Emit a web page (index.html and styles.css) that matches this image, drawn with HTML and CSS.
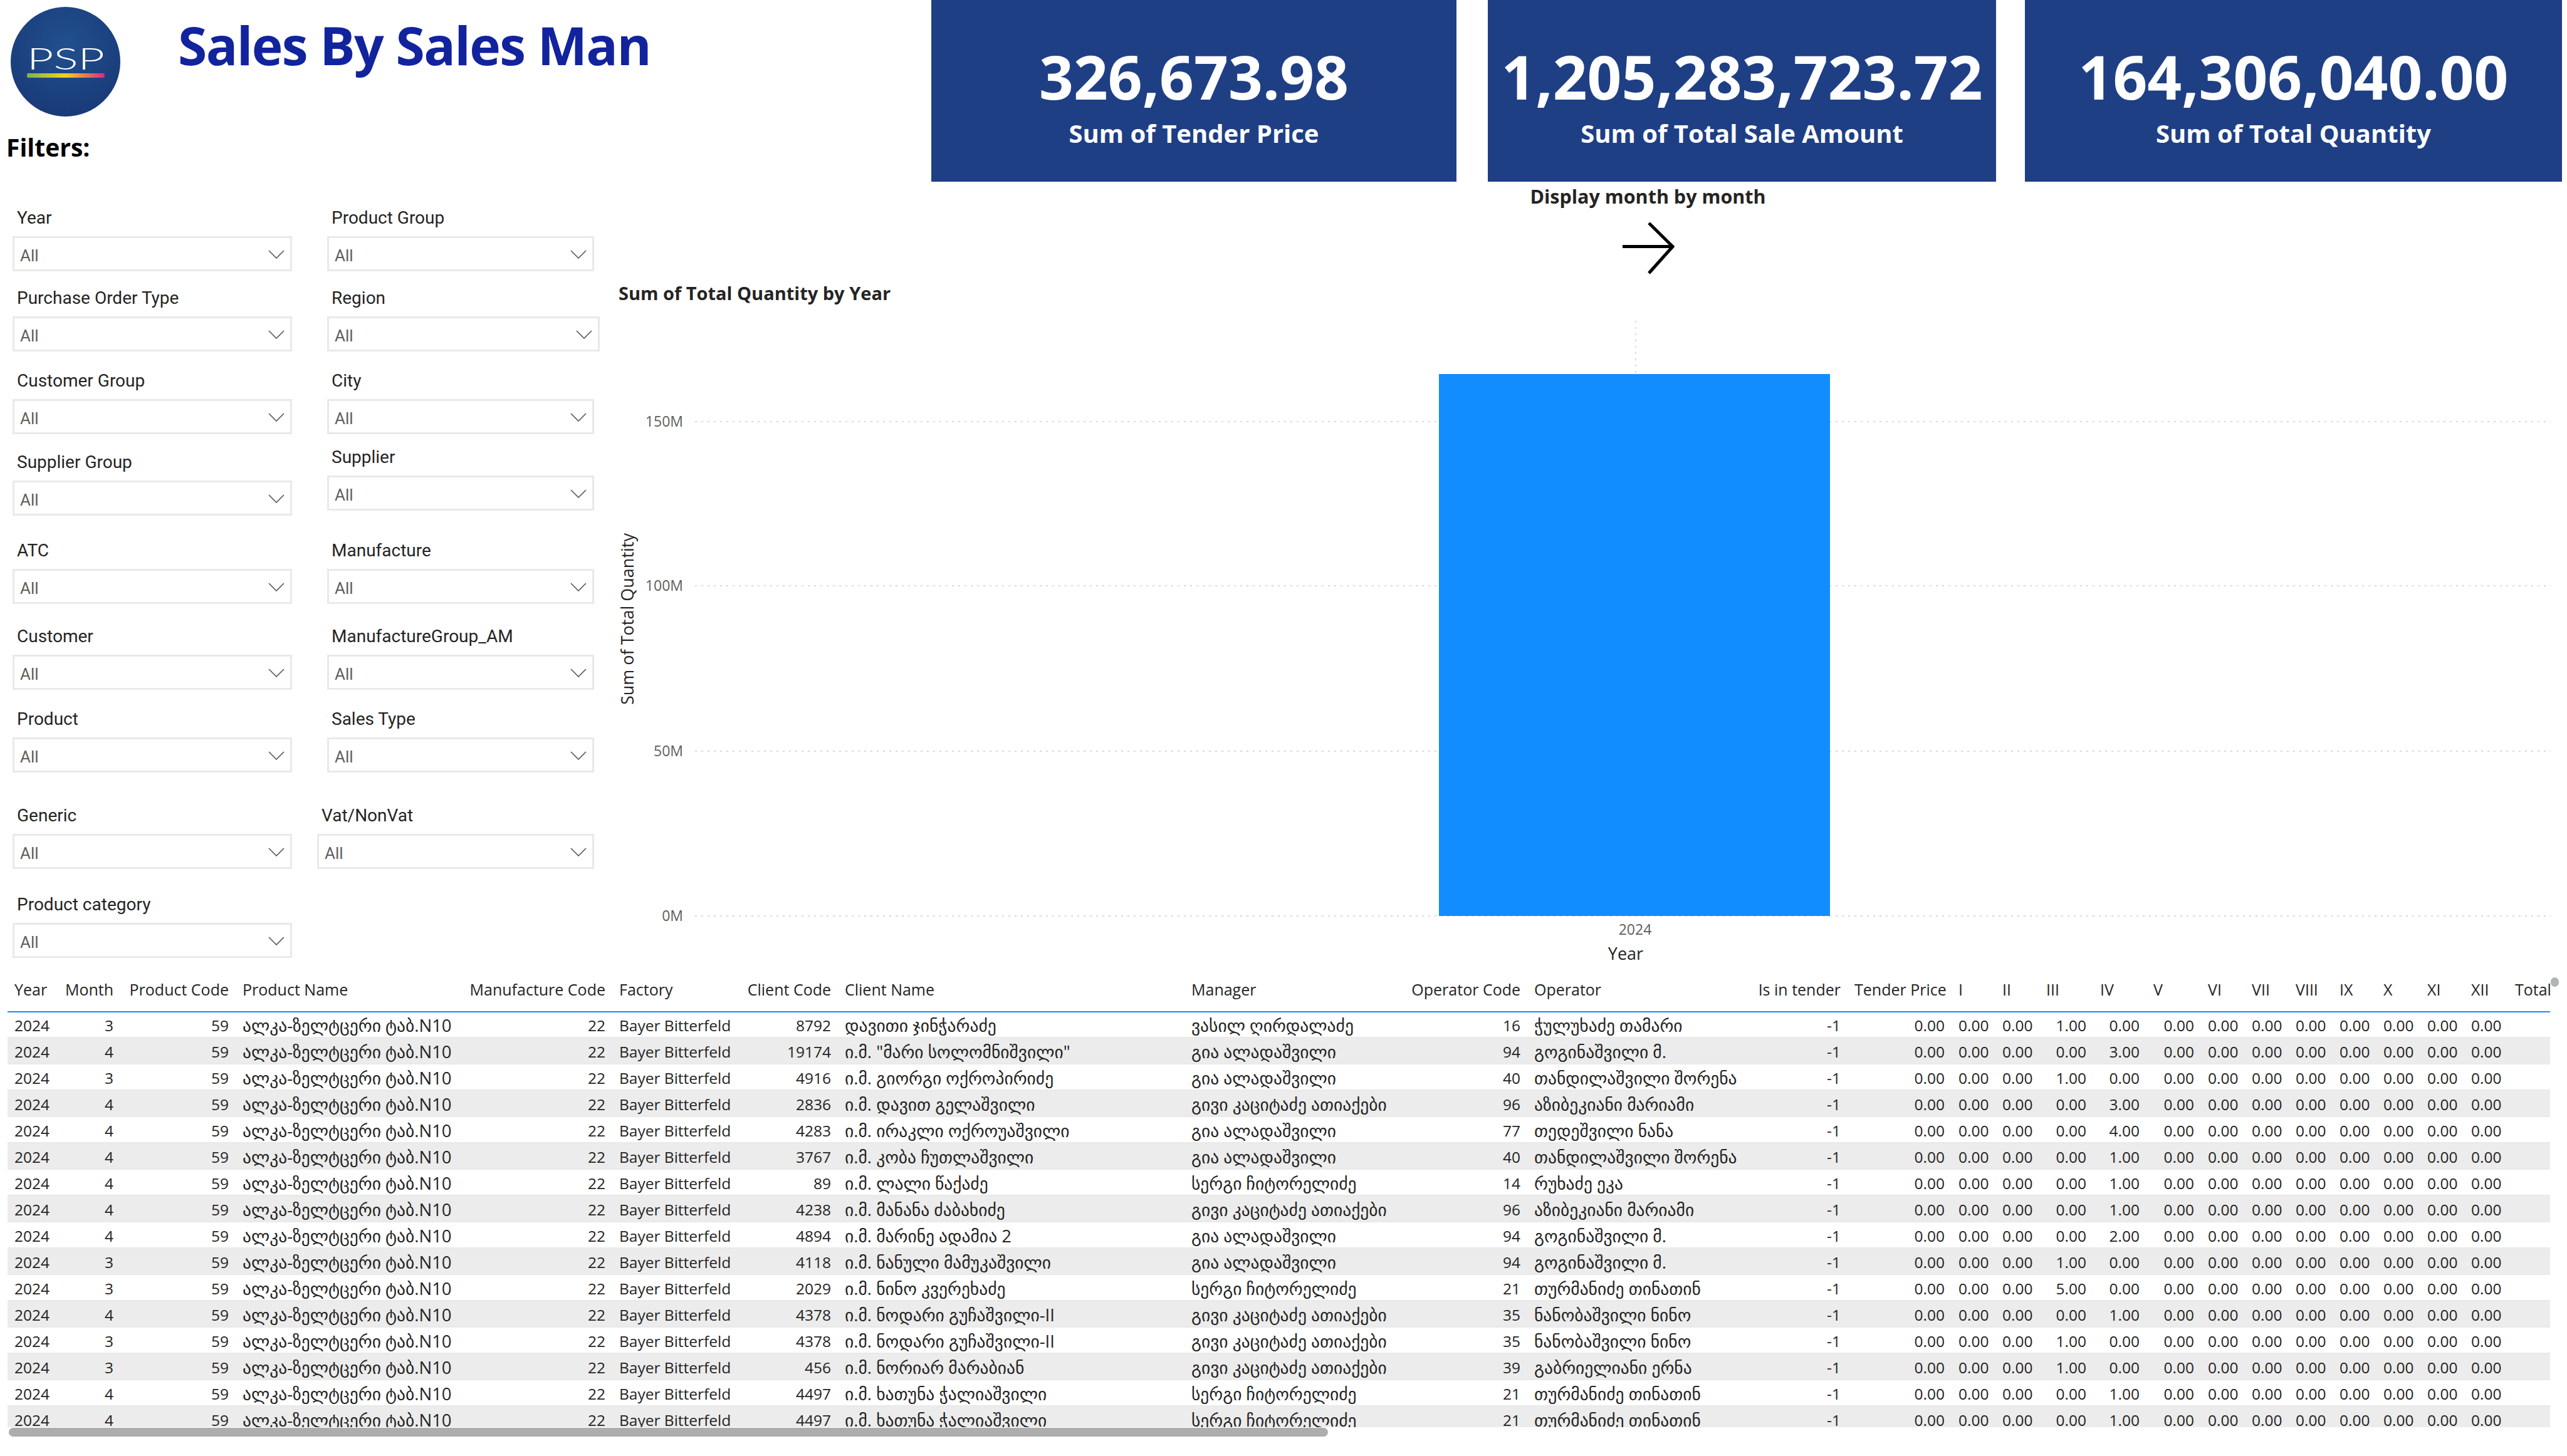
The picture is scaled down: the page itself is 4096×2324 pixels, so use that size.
FILE: index.html
```html
<!DOCTYPE html>
<html lang="en">
<head>
  <meta charset="UTF-8">
  <title>Sales By Sales Man</title>
  <link rel="stylesheet" href="styles.css">
</head>
<body>

  <div class="main">
    <div class="left">
      <div class="brand">
        <svg class="logo" width="175" height="175" viewBox="0 0 175 175">
          <defs>
            <radialGradient id="logoBg" cx="50%" cy="35%" r="65%">
              <stop offset="0" stop-color="#21508f"/>
              <stop offset="1" stop-color="#1a3a78"/>
            </radialGradient>
            <linearGradient id="logoBar">
              <stop offset="0" stop-color="#7ab648"/>
              <stop offset="0.5" stop-color="#f7d117"/>
              <stop offset="1" stop-color="#d6278a"/>
            </linearGradient>
          </defs>
          <circle cx="87.5" cy="87.5" r="87.5" fill="url(#logoBg)"/>
          <text class="logo-text" x="26" y="100" textLength="124" lengthAdjust="spacingAndGlyphs">PSP</text>
          <rect x="26" y="106" width="124" height="7" rx="2" fill="url(#logoBar)"/>
        </svg>
        <div class="title">Sales By Sales Man</div>
      </div>
      <div class="filters-title">Filters:</div>

      <div class="filters">
        <div class="field"><label>Year</label><div class="select"><span>All</span><svg width="26" height="14" viewBox="0 0 26 14"><path d="M1 1 L13 13 L25 1"/></svg></div></div>
        <div class="field"><label>Product Group</label><div class="select"><span>All</span><svg width="26" height="14" viewBox="0 0 26 14"><path d="M1 1 L13 13 L25 1"/></svg></div></div>
        <div class="field"><label>Purchase Order Type</label><div class="select"><span>All</span><svg width="26" height="14" viewBox="0 0 26 14"><path d="M1 1 L13 13 L25 1"/></svg></div></div>
        <div class="field field-wide"><label>Region</label><div class="select"><span>All</span><svg width="26" height="14" viewBox="0 0 26 14"><path d="M1 1 L13 13 L25 1"/></svg></div></div>
        <div class="field"><label>Customer Group</label><div class="select"><span>All</span><svg width="26" height="14" viewBox="0 0 26 14"><path d="M1 1 L13 13 L25 1"/></svg></div></div>
        <div class="field"><label>City</label><div class="select"><span>All</span><svg width="26" height="14" viewBox="0 0 26 14"><path d="M1 1 L13 13 L25 1"/></svg></div></div>
        <div class="field"><label>Supplier Group</label><div class="select"><span>All</span><svg width="26" height="14" viewBox="0 0 26 14"><path d="M1 1 L13 13 L25 1"/></svg></div></div>
        <div class="field field-up"><label>Supplier</label><div class="select"><span>All</span><svg width="26" height="14" viewBox="0 0 26 14"><path d="M1 1 L13 13 L25 1"/></svg></div></div>
        <div class="field"><label>ATC</label><div class="select"><span>All</span><svg width="26" height="14" viewBox="0 0 26 14"><path d="M1 1 L13 13 L25 1"/></svg></div></div>
        <div class="field"><label>Manufacture</label><div class="select"><span>All</span><svg width="26" height="14" viewBox="0 0 26 14"><path d="M1 1 L13 13 L25 1"/></svg></div></div>
        <div class="field"><label>Customer</label><div class="select"><span>All</span><svg width="26" height="14" viewBox="0 0 26 14"><path d="M1 1 L13 13 L25 1"/></svg></div></div>
        <div class="field"><label>ManufactureGroup_AM</label><div class="select"><span>All</span><svg width="26" height="14" viewBox="0 0 26 14"><path d="M1 1 L13 13 L25 1"/></svg></div></div>
        <div class="field"><label>Product</label><div class="select"><span>All</span><svg width="26" height="14" viewBox="0 0 26 14"><path d="M1 1 L13 13 L25 1"/></svg></div></div>
        <div class="field"><label>Sales Type</label><div class="select"><span>All</span><svg width="26" height="14" viewBox="0 0 26 14"><path d="M1 1 L13 13 L25 1"/></svg></div></div>
        <div class="field"><label>Generic</label><div class="select"><span>All</span><svg width="26" height="14" viewBox="0 0 26 14"><path d="M1 1 L13 13 L25 1"/></svg></div></div>
        <div class="field field-left"><label>Vat/NonVat</label><div class="select"><span>All</span><svg width="26" height="14" viewBox="0 0 26 14"><path d="M1 1 L13 13 L25 1"/></svg></div></div>
        <div class="field"><label>Product category</label><div class="select"><span>All</span><svg width="26" height="14" viewBox="0 0 26 14"><path d="M1 1 L13 13 L25 1"/></svg></div></div>
      </div>
    </div>

    <div class="right">
      <div class="kpis">
        <div class="kpi kpi-1"><div class="kpi-value">326,673.98</div><div class="kpi-label">Sum of Tender Price</div></div>
        <div class="kpi kpi-2"><div class="kpi-value">1,205,283,723.72</div><div class="kpi-label">Sum of Total Sale Amount</div></div>
        <div class="kpi kpi-3"><div class="kpi-value">164,306,040.00</div><div class="kpi-label">Sum of Total Quantity</div></div>
      </div>

      <div class="month-link">
        <div class="month-text">Display month by month</div>
        <svg class="arrow" width="84" height="84" viewBox="0 0 84 84"><path d="M1 38.5 H80"/><path d="M43 1 L81 38.5 L43 81"/></svg>
      </div>

      <svg class="chart" width="3111" height="1108" viewBox="0 0 3111 1108">
        <text class="chart-title" x="2" y="39">Sum of Total Quantity by Year</text>
        <line class="grid" x1="124" y1="233" x2="3085" y2="233"/>
        <line class="grid" x1="124" y1="495" x2="3085" y2="495"/>
        <line class="grid" x1="124" y1="759" x2="3085" y2="759"/>
        <line class="grid" x1="124" y1="1022" x2="3085" y2="1022"/>
        <line class="grid" x1="1625" y1="72" x2="1625" y2="156"/>
        <rect class="bar" x="1311" y="157" width="624" height="865"/>
        <text class="tick" x="105" y="241" text-anchor="end">150M</text>
        <text class="tick" x="105" y="503" text-anchor="end">100M</text>
        <text class="tick" x="105" y="767" text-anchor="end">50M</text>
        <text class="tick" x="105" y="1030" text-anchor="end">0M</text>
        <text class="tick" x="1624" y="1052" text-anchor="middle">2024</text>
        <text class="axis-title" x="1609" y="1092" text-anchor="middle">Year</text>
        <text class="axis-title" text-anchor="middle" transform="translate(26 548) rotate(-90)">Sum of Total Quantity</text>
      </svg>
    </div>
  </div>

  <div class="table-wrap">
    <div class="table-clip">
    <table class="sales">
      <colgroup>
        <col class="c80"><col class="c100"><col class="c184"><col class="c361"><col class="c240"><col class="c201"><col class="c159"><col class="c553"><col class="c349"><col class="c198"><col class="c356"><col class="c155"><col class="c166">
        <col class="c70"><col class="c70"><col class="c86"><col class="c85"><col class="c87"><col class="c70"><col class="c70"><col class="c70"><col class="c70"><col class="c70"><col class="c70"><col class="c70"><col class="c67">
      </colgroup>
      <thead>
        <tr><th>Year</th><th class="num">Month</th><th class="num">Product Code</th><th>Product Name</th><th class="num">Manufacture Code</th><th>Factory</th><th class="num">Client Code</th><th>Client Name</th><th>Manager</th><th class="num">Operator Code</th><th>Operator</th><th class="num">Is in tender</th><th class="num">Tender Price</th><th>I</th><th>II</th><th>III</th><th>IV</th><th>V</th><th>VI</th><th>VII</th><th>VIII</th><th>IX</th><th>X</th><th>XI</th><th>XII</th><th>Total</th></tr>
      </thead>
      <tbody>
        <tr><td>2024</td><td>3</td><td>59</td><td class="geo">ალკა-ზელტცერი ტაბ.N10</td><td>22</td><td>Bayer Bitterfeld</td><td>8792</td><td class="geo">დავითი ჯინჭარაძე</td><td class="geo">ვასილ ღირდალაძე</td><td>16</td><td class="geo">ჭულუხაძე თამარი</td><td>-1</td><td>0.00</td><td>0.00</td><td>0.00</td><td>1.00</td><td>0.00</td><td>0.00</td><td>0.00</td><td>0.00</td><td>0.00</td><td>0.00</td><td>0.00</td><td>0.00</td><td>0.00</td><td></td></tr>
        <tr><td>2024</td><td>4</td><td>59</td><td class="geo">ალკა-ზელტცერი ტაბ.N10</td><td>22</td><td>Bayer Bitterfeld</td><td>19174</td><td class="geo">ი.მ. "მარი სოლომნიშვილი"</td><td class="geo">გია ალადაშვილი</td><td>94</td><td class="geo">გოგინაშვილი მ.</td><td>-1</td><td>0.00</td><td>0.00</td><td>0.00</td><td>0.00</td><td>3.00</td><td>0.00</td><td>0.00</td><td>0.00</td><td>0.00</td><td>0.00</td><td>0.00</td><td>0.00</td><td>0.00</td><td></td></tr>
        <tr><td>2024</td><td>3</td><td>59</td><td class="geo">ალკა-ზელტცერი ტაბ.N10</td><td>22</td><td>Bayer Bitterfeld</td><td>4916</td><td class="geo">ი.მ. გიორგი ოქროპირიძე</td><td class="geo">გია ალადაშვილი</td><td>40</td><td class="geo">თანდილაშვილი შორენა</td><td>-1</td><td>0.00</td><td>0.00</td><td>0.00</td><td>1.00</td><td>0.00</td><td>0.00</td><td>0.00</td><td>0.00</td><td>0.00</td><td>0.00</td><td>0.00</td><td>0.00</td><td>0.00</td><td></td></tr>
        <tr><td>2024</td><td>4</td><td>59</td><td class="geo">ალკა-ზელტცერი ტაბ.N10</td><td>22</td><td>Bayer Bitterfeld</td><td>2836</td><td class="geo">ი.მ. დავით გელაშვილი</td><td class="geo">გივი კაციტაძე ათიაქები</td><td>96</td><td class="geo">აზიბეკიანი მარიამი</td><td>-1</td><td>0.00</td><td>0.00</td><td>0.00</td><td>0.00</td><td>3.00</td><td>0.00</td><td>0.00</td><td>0.00</td><td>0.00</td><td>0.00</td><td>0.00</td><td>0.00</td><td>0.00</td><td></td></tr>
        <tr><td>2024</td><td>4</td><td>59</td><td class="geo">ალკა-ზელტცერი ტაბ.N10</td><td>22</td><td>Bayer Bitterfeld</td><td>4283</td><td class="geo">ი.მ. ირაკლი ოქროუაშვილი</td><td class="geo">გია ალადაშვილი</td><td>77</td><td class="geo">თედეშვილი ნანა</td><td>-1</td><td>0.00</td><td>0.00</td><td>0.00</td><td>0.00</td><td>4.00</td><td>0.00</td><td>0.00</td><td>0.00</td><td>0.00</td><td>0.00</td><td>0.00</td><td>0.00</td><td>0.00</td><td></td></tr>
        <tr><td>2024</td><td>4</td><td>59</td><td class="geo">ალკა-ზელტცერი ტაბ.N10</td><td>22</td><td>Bayer Bitterfeld</td><td>3767</td><td class="geo">ი.მ. კობა ჩუთლაშვილი</td><td class="geo">გია ალადაშვილი</td><td>40</td><td class="geo">თანდილაშვილი შორენა</td><td>-1</td><td>0.00</td><td>0.00</td><td>0.00</td><td>0.00</td><td>1.00</td><td>0.00</td><td>0.00</td><td>0.00</td><td>0.00</td><td>0.00</td><td>0.00</td><td>0.00</td><td>0.00</td><td></td></tr>
        <tr><td>2024</td><td>4</td><td>59</td><td class="geo">ალკა-ზელტცერი ტაბ.N10</td><td>22</td><td>Bayer Bitterfeld</td><td>89</td><td class="geo">ი.მ. ლალი წაქაძე</td><td class="geo">სერგი ჩიტორელიძე</td><td>14</td><td class="geo">რუხაძე ეკა</td><td>-1</td><td>0.00</td><td>0.00</td><td>0.00</td><td>0.00</td><td>1.00</td><td>0.00</td><td>0.00</td><td>0.00</td><td>0.00</td><td>0.00</td><td>0.00</td><td>0.00</td><td>0.00</td><td></td></tr>
        <tr><td>2024</td><td>4</td><td>59</td><td class="geo">ალკა-ზელტცერი ტაბ.N10</td><td>22</td><td>Bayer Bitterfeld</td><td>4238</td><td class="geo">ი.მ. მანანა ძაბახიძე</td><td class="geo">გივი კაციტაძე ათიაქები</td><td>96</td><td class="geo">აზიბეკიანი მარიამი</td><td>-1</td><td>0.00</td><td>0.00</td><td>0.00</td><td>0.00</td><td>1.00</td><td>0.00</td><td>0.00</td><td>0.00</td><td>0.00</td><td>0.00</td><td>0.00</td><td>0.00</td><td>0.00</td><td></td></tr>
        <tr><td>2024</td><td>4</td><td>59</td><td class="geo">ალკა-ზელტცერი ტაბ.N10</td><td>22</td><td>Bayer Bitterfeld</td><td>4894</td><td class="geo">ი.მ. მარინე ადამია 2</td><td class="geo">გია ალადაშვილი</td><td>94</td><td class="geo">გოგინაშვილი მ.</td><td>-1</td><td>0.00</td><td>0.00</td><td>0.00</td><td>0.00</td><td>2.00</td><td>0.00</td><td>0.00</td><td>0.00</td><td>0.00</td><td>0.00</td><td>0.00</td><td>0.00</td><td>0.00</td><td></td></tr>
        <tr><td>2024</td><td>3</td><td>59</td><td class="geo">ალკა-ზელტცერი ტაბ.N10</td><td>22</td><td>Bayer Bitterfeld</td><td>4118</td><td class="geo">ი.მ. ნანული მამუკაშვილი</td><td class="geo">გია ალადაშვილი</td><td>94</td><td class="geo">გოგინაშვილი მ.</td><td>-1</td><td>0.00</td><td>0.00</td><td>0.00</td><td>1.00</td><td>0.00</td><td>0.00</td><td>0.00</td><td>0.00</td><td>0.00</td><td>0.00</td><td>0.00</td><td>0.00</td><td>0.00</td><td></td></tr>
        <tr><td>2024</td><td>3</td><td>59</td><td class="geo">ალკა-ზელტცერი ტაბ.N10</td><td>22</td><td>Bayer Bitterfeld</td><td>2029</td><td class="geo">ი.მ. ნინო კვერეხაძე</td><td class="geo">სერგი ჩიტორელიძე</td><td>21</td><td class="geo">თურმანიძე თინათინ</td><td>-1</td><td>0.00</td><td>0.00</td><td>0.00</td><td>5.00</td><td>0.00</td><td>0.00</td><td>0.00</td><td>0.00</td><td>0.00</td><td>0.00</td><td>0.00</td><td>0.00</td><td>0.00</td><td></td></tr>
        <tr><td>2024</td><td>4</td><td>59</td><td class="geo">ალკა-ზელტცერი ტაბ.N10</td><td>22</td><td>Bayer Bitterfeld</td><td>4378</td><td class="geo">ი.მ. ნოდარი გუჩაშვილი-II</td><td class="geo">გივი კაციტაძე ათიაქები</td><td>35</td><td class="geo">ნანობაშვილი ნინო</td><td>-1</td><td>0.00</td><td>0.00</td><td>0.00</td><td>0.00</td><td>1.00</td><td>0.00</td><td>0.00</td><td>0.00</td><td>0.00</td><td>0.00</td><td>0.00</td><td>0.00</td><td>0.00</td><td></td></tr>
        <tr><td>2024</td><td>3</td><td>59</td><td class="geo">ალკა-ზელტცერი ტაბ.N10</td><td>22</td><td>Bayer Bitterfeld</td><td>4378</td><td class="geo">ი.მ. ნოდარი გუჩაშვილი-II</td><td class="geo">გივი კაციტაძე ათიაქები</td><td>35</td><td class="geo">ნანობაშვილი ნინო</td><td>-1</td><td>0.00</td><td>0.00</td><td>0.00</td><td>1.00</td><td>0.00</td><td>0.00</td><td>0.00</td><td>0.00</td><td>0.00</td><td>0.00</td><td>0.00</td><td>0.00</td><td>0.00</td><td></td></tr>
        <tr><td>2024</td><td>3</td><td>59</td><td class="geo">ალკა-ზელტცერი ტაბ.N10</td><td>22</td><td>Bayer Bitterfeld</td><td>456</td><td class="geo">ი.მ. ნორიარ მარაბიან</td><td class="geo">გივი კაციტაძე ათიაქები</td><td>39</td><td class="geo">გაბრიელიანი ერნა</td><td>-1</td><td>0.00</td><td>0.00</td><td>0.00</td><td>1.00</td><td>0.00</td><td>0.00</td><td>0.00</td><td>0.00</td><td>0.00</td><td>0.00</td><td>0.00</td><td>0.00</td><td>0.00</td><td></td></tr>
        <tr><td>2024</td><td>4</td><td>59</td><td class="geo">ალკა-ზელტცერი ტაბ.N10</td><td>22</td><td>Bayer Bitterfeld</td><td>4497</td><td class="geo">ი.მ. ხათუნა ჭალიაშვილი</td><td class="geo">სერგი ჩიტორელიძე</td><td>21</td><td class="geo">თურმანიძე თინათინ</td><td>-1</td><td>0.00</td><td>0.00</td><td>0.00</td><td>0.00</td><td>1.00</td><td>0.00</td><td>0.00</td><td>0.00</td><td>0.00</td><td>0.00</td><td>0.00</td><td>0.00</td><td>0.00</td><td></td></tr>
        <tr><td>2024</td><td>4</td><td>59</td><td class="geo">ალკა-ზელტცერი ტაბ.N10</td><td>22</td><td>Bayer Bitterfeld</td><td>4497</td><td class="geo">ი.მ. ხათუნა ჭალიაშვილი</td><td class="geo">სერგი ჩიტორელიძე</td><td>21</td><td class="geo">თურმანიძე თინათინ</td><td>-1</td><td>0.00</td><td>0.00</td><td>0.00</td><td>0.00</td><td>1.00</td><td>0.00</td><td>0.00</td><td>0.00</td><td>0.00</td><td>0.00</td><td>0.00</td><td>0.00</td><td>0.00</td><td></td></tr>
      </tbody>
    </table>
    </div>
    <div class="scroll-h"></div>
    <div class="scroll-v"></div>
  </div>

</body>
</html>
```

FILE: styles.css
```css
body {
  margin: 0;
  background-color: #fff;
  font-family: 'Open Sans', 'DejaVu Sans', sans-serif;
  color: #252423;
  overflow: hidden;
}
.main {
  display: flex;
  height: 1548px;
}
.left {
  width: 985px;
  flex: none;
}
.right {
  flex: 1;
}

/* header + logo */
.brand {
  display: flex;
  padding: 11px 0 0 17px;
  height: 175px;
}
.logo {
  flex: none;
}
.logo-text {
  font-family: 'Lato', sans-serif;
  font-size: 47px;
  font-weight: 300;
  fill: #fff;
}
.title {
  margin: 11px 0 0 92px;
  font-size: 84px;
  line-height: 100px;
  font-weight: 700;
  letter-spacing: -1.6px;
  color: #12239e;
  white-space: nowrap;
}
.filters-title {
  margin: 24px 0 0 10px;
  font-size: 39px;
  line-height: 50px;
  font-weight: 700;
  color: #000;
}

/* slicers */
.filters {
  display: grid;
  grid-template-columns: 446px 426px;
  grid-template-rows: 128px 132px 130px 141px 137px 132px 154px 142px 104px;
  column-gap: 56px;
  margin: 69px 0 0 20px;
}
.field label {
  display: block;
  height: 38px;
  margin: 0 0 10px 7px;
  font-family: 'Roboto', sans-serif;
  font-size: 28px;
  line-height: 38px;
  color: #252423;
}
.field-wide {
  width: 435px;
}
.field-up {
  margin-top: -8px;
}
.field-left {
  margin-left: -16px;
}
.select {
  display: flex;
  justify-content: space-between;
  align-items: center;
  box-sizing: border-box;
  height: 56px;
  padding: 5px 9px 0;
  border: 3px solid #e9e9e9;
  font-family: 'Roboto', sans-serif;
  font-size: 26px;
  color: #605e5c;
}
.select svg {
  margin-top: -4px;
  fill: none;
  stroke: #555;
  stroke-width: 1.6;
}

/* kpi cards */
.kpis {
  display: flex;
  padding-left: 501px;
  height: 290px;
}
.kpi {
  box-sizing: border-box;
  padding-top: 62px;
  background-color: #1f3f85;
  color: #fff;
  text-align: center;
  white-space: nowrap;
}
.kpi-1 {
  width: 838px;
}
.kpi-2 {
  width: 811px;
  margin-left: 50px;
}
.kpi-3 {
  width: 857px;
  margin-left: 46px;
}
.kpi-value {
  font-size: 96px;
  line-height: 120px;
  font-weight: 700;
}
.kpi-label {
  margin-top: 1px;
  font-size: 40px;
  line-height: 60px;
  font-weight: 700;
}

/* month by month link */
.month-link {
  display: flex;
  flex-direction: column;
  align-items: center;
  box-sizing: border-box;
  width: 373px;
  height: 150px;
  margin-left: 1458px;
  padding-top: 3px;
}
.month-text {
  font-size: 30.5px;
  line-height: 40px;
  font-weight: 700;
  white-space: nowrap;
}
.arrow {
  margin-top: 22px;
  fill: none;
  stroke: #000;
  stroke-width: 5;
}

/* column chart */
.chart {
  display: block;
}
.chart-title {
  font-size: 29px;
  font-weight: 700;
  fill: #252423;
}
.grid {
  stroke: #d9d9d9;
  stroke-width: 2;
  stroke-dasharray: 3 7;
}
.bar {
  fill: #118dff;
}
.tick {
  font-size: 23px;
  fill: #605e5c;
}
.axis-title {
  font-size: 27px;
  fill: #252423;
}

/* table */
.table-wrap {
  position: relative;
  height: 776px;
  padding-left: 12px;
}
.table-clip {
  height: 730px;
  overflow: hidden;
}
.sales {
  width: 4056px;
  border-collapse: separate;
  border-spacing: 0;
  table-layout: fixed;
  font-size: 24.5px;
}
.sales th {
  height: 68px;
  box-sizing: border-box;
  padding: 0 11px 4px;
  border-bottom: 2px solid #118dff;
  font-size: 25px;
  font-weight: 400;
  text-align: left;
  white-space: nowrap;
}
.sales th.num {
  text-align: right;
}
.sales td {
  height: 42px;
  box-sizing: border-box;
  padding: 2px 11px 0;
  border-bottom: 2px solid #e9e9e9;
  text-align: right;
  white-space: nowrap;
  overflow: hidden;
}
.sales tbody tr:first-child td {
  height: 41px;
}
.sales tbody tr:nth-child(even) td {
  background-color: #ececec;
}
.sales td:first-child,
.sales td:nth-child(6),
.sales td.geo {
  text-align: left;
}
.sales td.geo {
  font-size: 27.5px;
}
.c67 { width: 67px; }
.c70 { width: 70px; }
.c80 { width: 80px; }
.c85 { width: 85px; }
.c86 { width: 86px; }
.c87 { width: 87px; }
.c100 { width: 100px; }
.c155 { width: 155px; }
.c159 { width: 159px; }
.c166 { width: 166px; }
.c184 { width: 184px; }
.c198 { width: 198px; }
.c201 { width: 201px; }
.c240 { width: 240px; }
.c349 { width: 349px; }
.c356 { width: 356px; }
.c361 { width: 361px; }
.c553 { width: 553px; }

/* scrollbars sit on top of the table */
.scroll-h {
  position: absolute;
  left: 14px;
  top: 731px;
  width: 2105px;
  height: 14px;
  border-radius: 7px;
  background-color: #adadad;
}
.scroll-v {
  position: absolute;
  left: 4070px;
  top: 12px;
  width: 13px;
  height: 15px;
  border-radius: 7px;
  background-color: #b3b3b3;
}
```
